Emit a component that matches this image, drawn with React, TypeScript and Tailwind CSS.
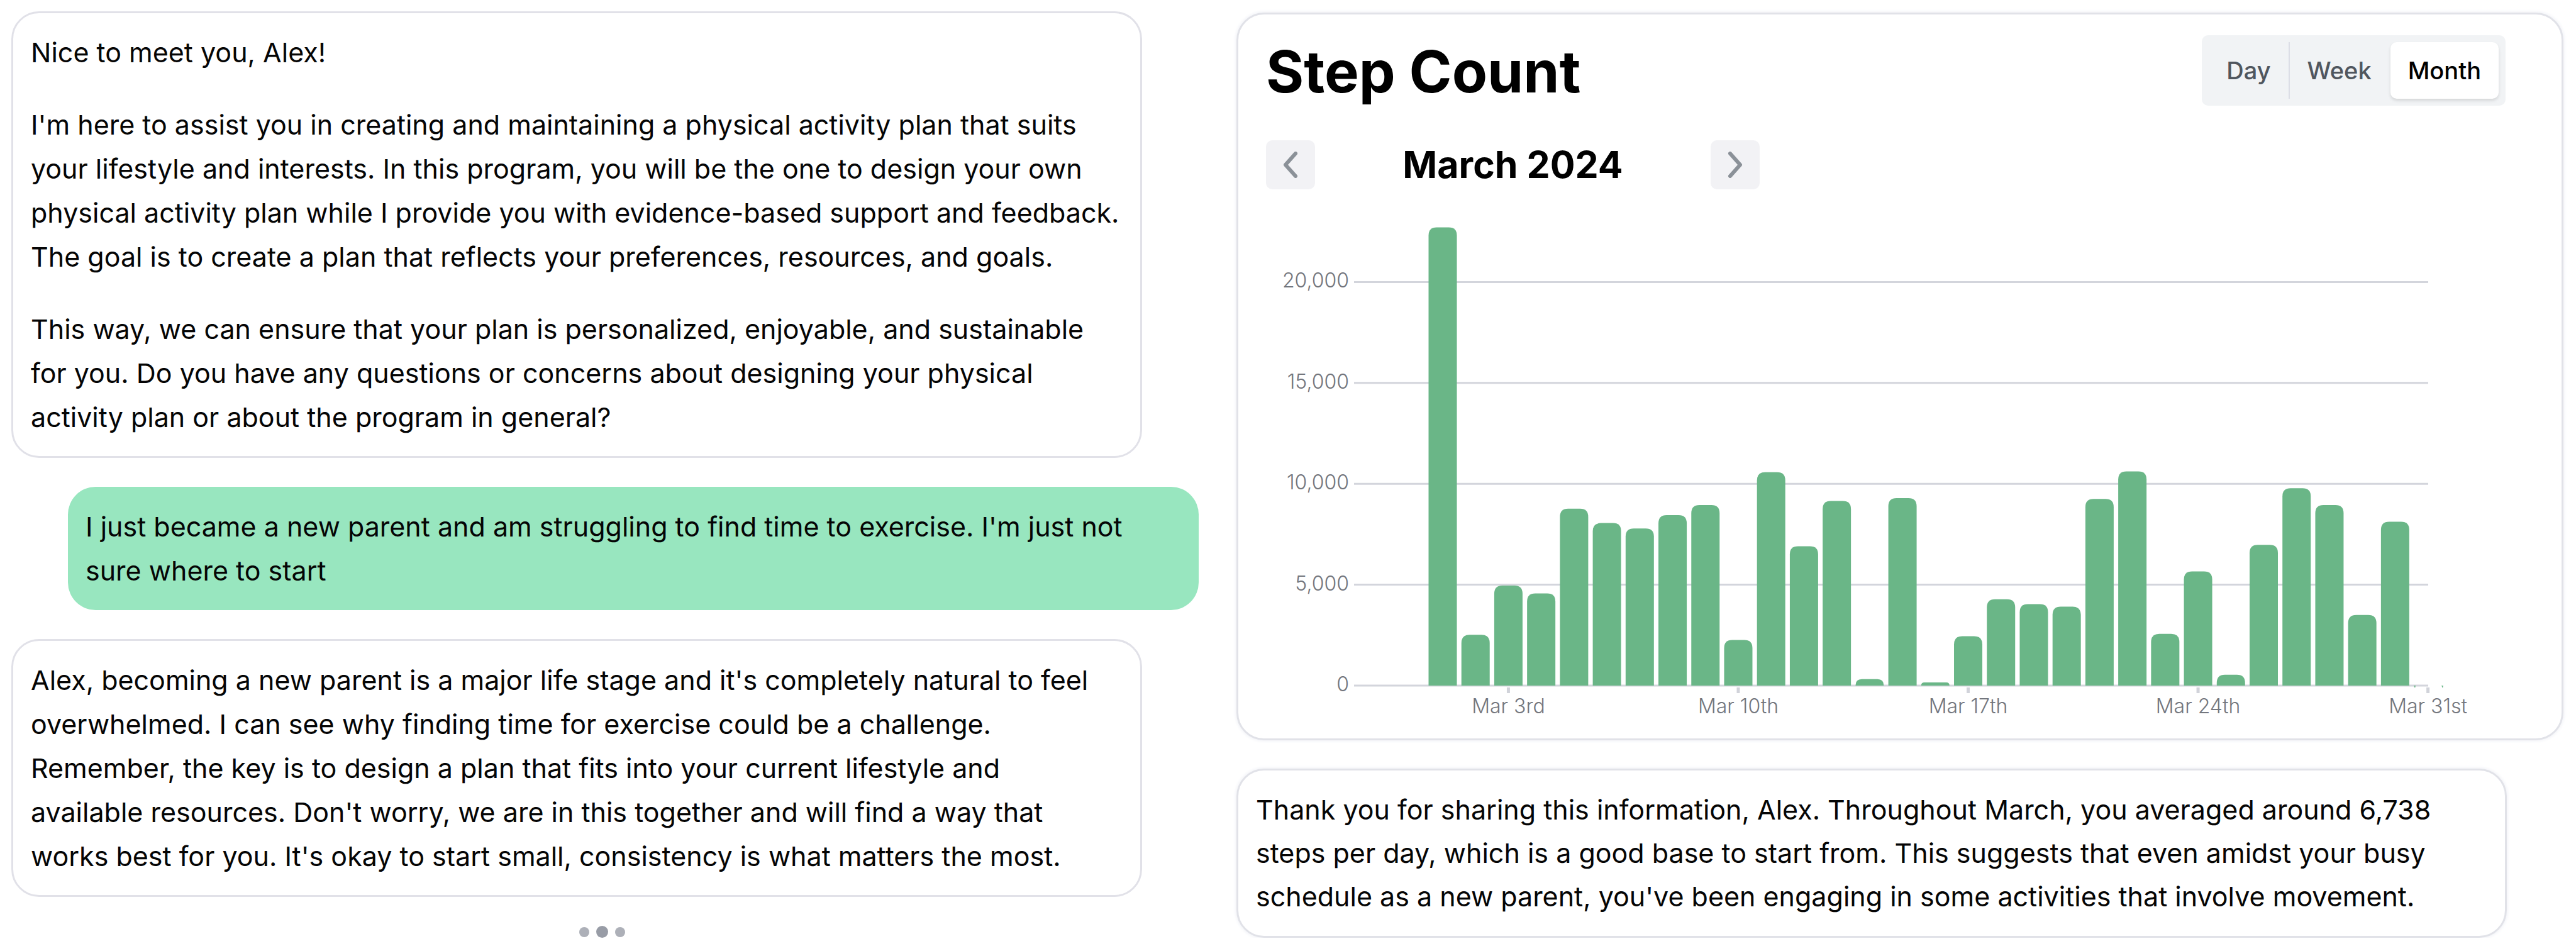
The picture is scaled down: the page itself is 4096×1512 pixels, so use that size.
import { useState, type ReactNode } from 'react'

const STEPS = [
  22706, 2520, 4956, 4566, 8765, 8055, 7787, 8447, 8943, 2263, 10573, 6908, 9149, 318, 9286, 156,
  2444, 4277, 4040, 3909, 9252, 10617, 2565, 5661, 540, 6973, 9781, 8946, 3500, 8123, 0,
]

const GRID = [20000, 15000, 10000, 5000, 0]

const TICKS = [
  { day: 3, label: 'Mar 3rd' },
  { day: 10, label: 'Mar 10th' },
  { day: 17, label: 'Mar 17th' },
  { day: 24, label: 'Mar 24th' },
  { day: 31, label: 'Mar 31st' },
]

const BASE = 760
const STEP_X = 52.22
const BAR = 45
const dayX = (day: number) => 325 + (day - 1) * STEP_X
const valueY = (value: number) => BASE - (value / 5000) * 160.4

function barPath(day: number, value: number) {
  const left = dayX(day) - BAR / 2
  const right = left + BAR
  const top = valueY(value)
  const r = Math.min(13, BASE - top)
  return `M${left} ${BASE}V${top + r}Q${left} ${top} ${left + r} ${top}H${right - r}Q${right} ${top} ${right} ${top + r}V${BASE}Z`
}

function StepChart() {
  return (
    <svg viewBox="0 0 2104 844" className="block h-auto w-full" role="img" aria-label="Daily steps, March 2024">
      <g stroke="#d3d5dc" strokeWidth="3">
        {GRID.map((v) => (
          <line key={v} x1="184" x2="1892" y1={valueY(v)} y2={valueY(v)} />
        ))}
      </g>
      <g fill="#d1d3da">
        {TICKS.map((t) => (
          <rect key={t.day} x={dayX(t.day) - 2.5} y="763" width="5" height="9" />
        ))}
      </g>
      <g fill="#6ab687">
        {STEPS.map((v, i) => (v > 0 ? <path key={i} d={barPath(i + 1, v)} /> : null))}
        <path d="M1869 760h3l-1 4zM1913 760h3l-1 4z" />
      </g>
      <g fill="#73767d" fontSize="32" fontWeight="300" textAnchor="end">
        {GRID.map((v) => (
          <text key={v} x="176" y={valueY(v) + 9}>
            {v.toLocaleString('en-US')}
          </text>
        ))}
      </g>
      <g fill="#73767d" fontSize="32" fontWeight="300" textAnchor="middle">
        {TICKS.map((t) => (
          <text key={t.day} x={dayX(t.day)} y="804">
            {t.label}
          </text>
        ))}
      </g>
    </svg>
  )
}

function CoachMessage({ children }: { children: ReactNode }) {
  return (
    <article className="mr-[90px] flex flex-col gap-[45px] rounded-[44px] border-3 border-[#e1e1e8] bg-white px-[28px] py-[27px]">
      {children}
    </article>
  )
}

function NavButton({ label, points }: { label: string; points: string }) {
  return (
    <button type="button" aria-label={label} className="flex size-[78px] items-center justify-center rounded-[10px] bg-[#f2f2f5]">
      <svg viewBox="0 0 24 42" className="h-[42px] w-[24px]" fill="none" stroke="#8b9198" strokeWidth="6" strokeLinecap="round" strokeLinejoin="round">
        <polyline points={points} />
      </svg>
    </button>
  )
}

const RANGES = ['Day', 'Week', 'Month']

function RangePicker() {
  const [active, setActive] = useState('Month')
  return (
    <div className="flex h-[112px] rounded-[10px] bg-[#f1f3f5] p-[11px]">
      {RANGES.map((range) => (
        <button
          key={range}
          type="button"
          aria-pressed={active === range}
          onClick={() => setActive(range)}
          className={
            active === range
              ? 'rounded-[10px] bg-white px-[28px] text-[38px] font-medium text-black shadow-[0_3px_5px_rgba(0,0,0,0.12)]'
              : 'border-r-2 border-[#dcdee6] px-[28px] text-[38px] font-medium text-[#50565e] nth-2:border-transparent'
          }
        >
          {range}
        </button>
      ))}
    </div>
  )
}

export default function App() {
  return (
    <main className="grid grid-cols-[1915fr_2181fr] bg-white font-['Inter',sans-serif] text-[43px] leading-[70px] whitespace-nowrap text-[#050505]">
      <section className="flex flex-col gap-[46px] pt-[18px] pr-[9px] pl-[18px]">
        <CoachMessage>
          <p>Nice to meet you, Alex!</p>
          <p>
            I'm here to assist you in creating and maintaining a physical activity plan that suits
            <br />
            your lifestyle and interests. In this program, you will be the one to design your own
            <br />
            physical activity plan while I provide you with evidence-based support and feedback.
            <br />
            The goal is to create a plan that reflects your preferences, resources, and goals.
          </p>
          <p>
            This way, we can ensure that your plan is personalized, enjoyable, and sustainable
            <br />
            for you. Do you have any questions or concerns about designing your physical
            <br />
            activity plan or about the program in general?
          </p>
        </CoachMessage>
        <article className="ml-[90px] rounded-[44px] bg-[#98e6bf] p-[28px]">
          <p>
            I just became a new parent and am struggling to find time to exercise. I'm just not
            <br />
            sure where to start
          </p>
        </article>
        <CoachMessage>
          <p>
            Alex, becoming a new parent is a major life stage and it's completely natural to feel
            <br />
            overwhelmed. I can see why finding time for exercise could be a challenge.
            <br />
            Remember, the key is to design a plan that fits into your current lifestyle and
            <br />
            available resources. Don't worry, we are in this together and will find a way that
            <br />
            works best for you. It's okay to start small, consistency is what matters the most.
          </p>
        </CoachMessage>
        <div role="status" aria-label="Coach is typing" className="mr-[9px] flex items-center justify-center gap-[11px]">
          <span className="size-[16px] rounded-full bg-[#adb0b8]" />
          <span className="size-[19px] rounded-full bg-[#989ca6]" />
          <span className="size-[16px] rounded-full bg-[#adb0b8]" />
        </div>
      </section>
      <section className="flex flex-col gap-[45px] pt-[20px] pr-[20px] pl-[51px]">
        <article className="rounded-[44px] border-3 border-[#e1e2e8] bg-white shadow-[0_0_4px_2px_#f4f5f9]">
          <header className="flex items-start justify-between pt-[33px] pr-[89px] pl-[44px]">
            <h1 className="pt-[4px] text-[92px] leading-[108px] font-bold text-black">Step Count</h1>
            <RangePicker />
          </header>
          <div className="mt-[55px] mb-[29px] ml-[44px] flex w-[785px] items-center justify-between">
            <NavButton label="Previous month" points="20,3 4,21 20,39" />
            <h2 className="text-[59px] font-bold text-black">March 2024</h2>
            <NavButton label="Next month" points="4,3 20,21 4,39" />
          </div>
          <StepChart />
        </article>
        <article className="mr-[90px] rounded-[44px] border-3 border-[#e1e2e8] bg-white p-[28px] leading-[69px] shadow-[0_0_4px_2px_#f4f5f9]">
          <p>
            Thank you for sharing this information, Alex. Throughout March, you averaged around 6,738
            <br />
            steps per day, which is a good base to start from. This suggests that even amidst your busy
            <br />
            schedule as a new parent, you've been engaging in some activities that involve movement.
          </p>
        </article>
      </section>
    </main>
  )
}
